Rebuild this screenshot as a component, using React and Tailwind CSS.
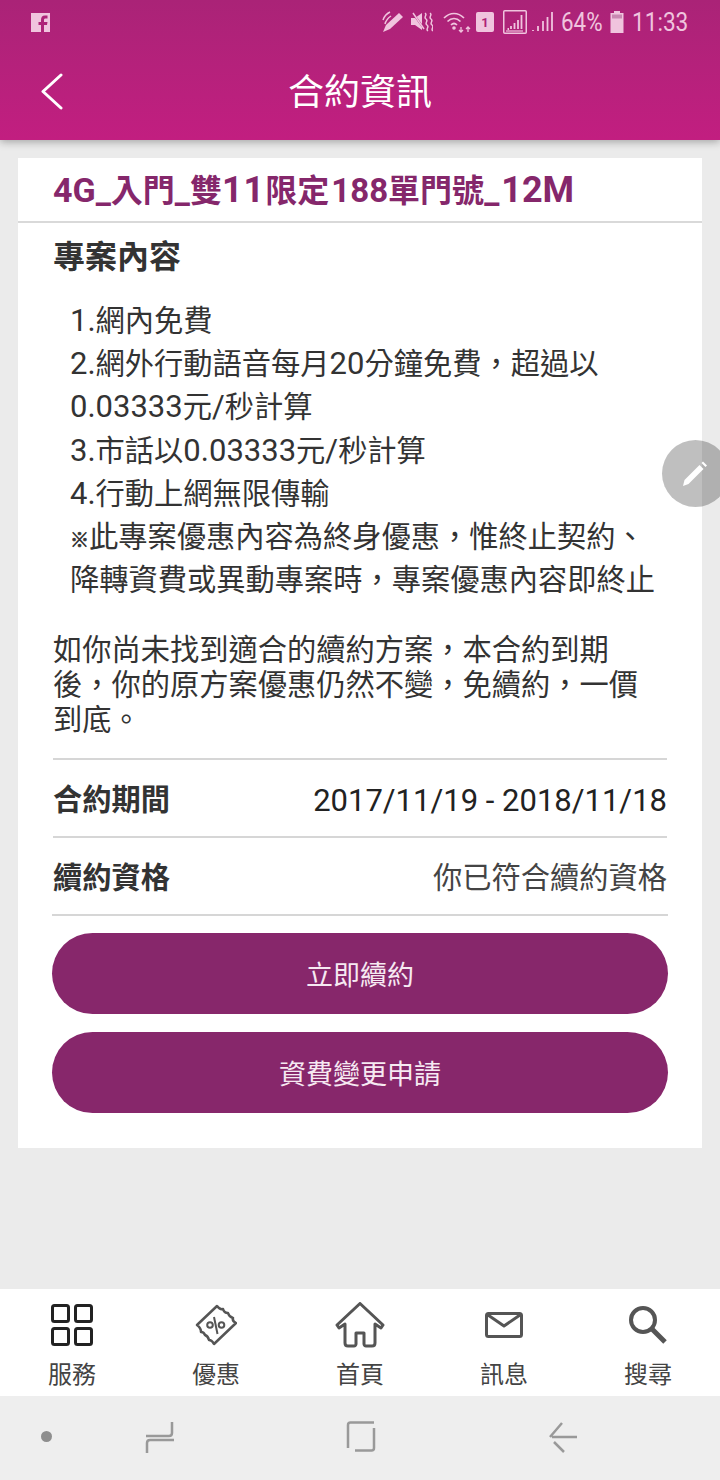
import React from "react";

const pink = "#f0c4de";
const C = "\uFF0C";

const Sb = ({ w, h, vb, children, className = "" }) => (
  <svg width={w} height={h} viewBox={vb} className={`shrink-0 ${className}`} fill="none">{children}</svg>
);

const L = ({ children }) => <span className="text-[31px] leading-[0]">{children}</span>;
const T = ({ children }) => <span className="text-[34px] leading-[0]">{children}</span>;

function StatusBar() {
  return (
    <div className="h-[44px] flex items-center justify-between pl-[30px] pr-[33px]">
      <Sb w={21} h={21} vb="0 0 21 21">
        <path fillRule="evenodd" d="M1 1h19v19h-6v-7h3l.5-3H14V8c0-1 .5-1.500 1.500-1.500h2V3.500H15C12 3.500 11 5.500 11 8v2H8.500v3H11v7H1z" fill={pink} />
      </Sb>
      <div className="flex items-center font-['Roboto',sans-serif] text-[26px] text-[#f0c4de]">
        <Sb w={23} h={22} vb="0 0 23 22" className="mr-[6px]">
          <path d="M1 21l3-7L17 2l4 4L8 18z" fill={pink} />
          <path d="M1 9c1-3 3-6 7-8M3 13C4 9 6 7 9 5" stroke={pink} strokeWidth="1.500" />
        </Sb>
        <Sb w={22} h={22} vb="0 0 22 22" className="mr-[10px]">
          <path d="M0 7h4l7-5v17l-7-5H0z" fill={pink} />
          <path d="M1 1l13 18" stroke="#ae2178" strokeWidth="2" />
          <path d="M2 2l11 16" stroke={pink} strokeWidth="1.500" />
          <path d="M14 2c3 2-2 4 1 6s-2 4 1 6-2 4 1 6M19 2c3 2-2 4 1 6s-2 4 1 6-2 4 1 6" stroke={pink} strokeWidth="1.500" />
        </Sb>
        <Sb w={29} h={22} vb="0 0 29 22" className="mr-[4px]">
          <path d="M1 7c6-6 14-6 20 0M4.500 10.500c4-4 9-4 13 0M8 14c2-2 4-2 6 0" stroke={pink} strokeWidth="1.700" />
          <circle cx="11" cy="17" r="1.800" fill={pink} />
          <path d="M18 16v5M16 19l2 2 2-2M25 21v-5M23 18l2-2 2 2" stroke={pink} strokeWidth="1.300" />
        </Sb>
        <div className="w-[18px] h-[20px] bg-[#f0c4de] rounded-[2px] flex items-center justify-center text-[13px] font-bold text-[#ae2178] mr-[9px] leading-none">1</div>
        <Sb w={24} h={24} vb="0 0 24 24" className="mr-[5px]">
          <rect x="0.750" y="0.750" width="22.500" height="22.500" rx="1" stroke={pink} strokeWidth="1.500" />
          <path d="M4.500 19h1.500M8 19v-3M11.500 19v-6M15 19v-9M18.500 19V5" stroke={pink} strokeWidth="1.800" />
          <path d="M3 21h17" stroke={pink} strokeWidth="1.200" />
        </Sb>
        <Sb w={21} h={22} vb="0 0 21 22" className="mr-[8px]">
          <path d="M1 20v-1M6 20v-5M11 20V10M15.500 20V6M20 20V1" stroke={pink} strokeWidth="1.800" />
        </Sb>
        <span className="w-[41px] mr-[8px] block whitespace-nowrap origin-left scale-x-[0.86]">64%</span>
        <Sb w={14} h={24} vb="0 0 14 24" className="mr-[8px]">
          <path d="M4 1h6v2h3.500v20H.5V3H4z" fill={pink} />
          <rect x="2" y="4.500" width="10" height="4" fill="#c987b1" />
        </Sb>
        <span className="w-[55px] block whitespace-nowrap origin-left scale-x-[0.87]">11:33</span>
      </div>
    </div>
  );
}

const Row = ({ label, value }) => (
  <div className="h-[78px] border-t-2 border-[#d6d6d6] flex items-center justify-between pt-[5px]">
    <span className="font-bold text-[#333]">{label}</span>
    {value}
  </div>
);

const Btn = ({ children }) => (
  <div className="h-[81px] rounded-full bg-[#87276b] text-[#f6e9f2] text-[27px] flex items-center justify-center pt-[4px]">{children}</div>
);

const NavItem = ({ icon, label }) => (
  <div className="w-[144px] flex flex-col items-center">
    <div className="h-[50px] flex items-center justify-center">{icon}</div>
    <div className="text-[24px] leading-[32px] mt-[9px] text-[#444]">{label}</div>
  </div>
);

export default function App() {
  return (
    <div className="relative h-[1480px] w-[720px] overflow-hidden flex flex-col bg-[#ebebeb] font-['Roboto','Noto_Sans_CJK_TC',sans-serif]">
      <div className="h-[140px] shrink-0 bg-gradient-to-b from-[#aa2377] to-[#c21e80] shadow-[0_2px_8px_rgba(0,0,0,0.3)] z-10">
        <StatusBar />
        <div className="relative h-[96px] flex items-center justify-center pt-[2px]">
          <svg className="absolute left-[40px] top-[29px]" width="23" height="37" viewBox="0 0 23 37" fill="none">
            <path d="M21 2L3 18.500 21 35" stroke="#fff" strokeWidth="3" strokeLinecap="round" strokeLinejoin="round" />
          </svg>
          <span className="text-white text-[36px]">合約資訊</span>
        </div>
      </div>

      <div className="flex-1 min-h-0 pt-[18px] px-[18px]">
        <div className="bg-white h-[990px]">
          <div className="h-[65px] border-b-2 border-[#d9d9d9] pl-[35px] pt-[2px] flex items-center text-[#85276b] font-bold text-[32px] whitespace-nowrap">
            <span><T>4G_</T>入門<T>_</T>雙<span className="text-[36px] leading-[0] tracking-[1px]">11</span>限定<span className="text-[33px] leading-[0] ml-[2px]">188</span>單門號<T>_</T><span className="text-[36px] leading-[0] ml-[2px]">12M</span></span>
          </div>
          <div className="px-[35px] text-[29.25px] text-[#333]">
            <div className="font-bold text-[32px] leading-[40px] mt-[14px]">專案內容</div>
            <div className="pl-[17px] leading-[43.2px] mt-[23px]">
              <div><L>1.</L>網內免費</div>
              <div><L>2.</L>網外行動語音每月<L>20</L>分鐘免費{C}超過以<br /><L>0.03333</L>元<L>/</L>秒計算</div>
              <div><L>3.</L>市話以<L>0.03333</L>元<L>/</L>秒計算</div>
              <div><L>4.</L>行動上網無限傳輸</div>
              <div><span className="inline-block w-[19px] text-[19px] leading-[0] font-black [-webkit-text-stroke:0.7px_#333]">※</span>此專案優惠內容為終身優惠{C}惟終止契約、<br />降轉資費或異動專案時{C}專案優惠內容即終止</div>
            </div>
            <div className="leading-[35px] mt-[31px]">
              如你尚未找到適合的續約方案{C}本合約到期<br />後{C}你的原方案優惠仍然不變{C}免續約{C}一價<br />到底。
            </div>
            <div className="mt-[20px]">
              <Row label="合約期間" value={<span className="text-[31px] text-[#222]">2017/11/19 - 2018/11/18</span>} />
              <Row label="續約資格" value={<span className="text-[#444]">你已符合續約資格</span>} />
              <div className="border-t-2 border-[#d6d6d6] pt-[17px] flex flex-col gap-[18px] -mx-[1px]">
                <Btn>立即續約</Btn>
                <Btn>資費變更申請</Btn>
              </div>
            </div>
          </div>
        </div>
      </div>

      <div className="h-[107px] shrink-0 bg-white flex pt-[11px]">
        <NavItem label="服務" icon={
          <svg width="42" height="42" viewBox="0 0 42 42" fill="none" stroke="#222" strokeWidth="3">
            <rect x="1.500" y="1.500" width="16" height="16" rx="2" /><rect x="24.500" y="1.500" width="16" height="16" rx="2" />
            <rect x="1.500" y="24.500" width="16" height="16" rx="2" /><rect x="24.500" y="24.500" width="16" height="16" rx="2" />
          </svg>} />
        <NavItem label="優惠" icon={
          <svg width="42" height="42" viewBox="0 0 42 42" fill="none" stroke="#555" strokeWidth="2.500" strokeLinejoin="round">
            <path d="M2 21L22 2Q25 6 28 5Q29 9 33 9Q34 13 38 14Q37 17 41 19L19 40Q17 36 14 36Q13 32 10 31Q9 28 6 28Q6 24 2 21z" />
            <circle cx="15" cy="21" r="2.800" strokeWidth="2" /><circle cx="26.500" cy="21" r="2.800" strokeWidth="2" />
            <path d="M19 13l3.500 17" strokeWidth="2" />
          </svg>} />
        <NavItem label="首頁" icon={
          <svg width="50" height="46" viewBox="0 0 50 46" fill="none" stroke="#555" strokeWidth="3" strokeLinejoin="round">
            <path d="M25 1.500L2 23l2 3 6-4v19c0 2 1 3 3 3h6c1 0 2-1 2-2V31h8v11c0 1 1 2 2 2h6c2 0 3-1 3-3V22l6 4 2-3z" />
          </svg>} />
        <NavItem label="訊息" icon={
          <svg width="38" height="26" viewBox="0 0 38 26" fill="none" stroke="#555" strokeWidth="3" strokeLinejoin="round">
            <rect x="1.500" y="1.500" width="35" height="23" rx="2" /><path d="M3 3l16 11L35 3" />
          </svg>} />
        <NavItem label="搜尋" icon={
          <svg width="40" height="40" viewBox="0 0 40 40" fill="none" stroke="#555">
            <circle cx="15" cy="15" r="12" strokeWidth="4" /><path d="M24 24l13 13" strokeWidth="5" />
          </svg>} />
      </div>

      <div className="h-[84px] shrink-0 bg-[#eeeeee] relative">
        <div className="absolute left-[41px] top-[35px] w-[11px] h-[11px] rounded-full bg-[#8e8e8e]" />
        <svg className="absolute left-[145px] top-[25px]" width="30" height="34" viewBox="0 0 30 34" fill="none" stroke="#999" strokeWidth="2.500">
          <path d="M27 1v11c0 2-1 3-3 3H1M2 32V22c0-2 1-3 3-3h24" />
        </svg>
        <svg className="absolute left-[346px] top-[25px]" width="30" height="32" viewBox="0 0 30 32" fill="none" stroke="#999" strokeWidth="2.500">
          <path d="M2 27V4c0-1.500 1-2.500 2.500-2.500H28M28 7v20c0 1.500-1 2.500-2.500 2.500H9" />
        </svg>
        <svg className="absolute left-[548px] top-[25px]" width="30" height="32" viewBox="0 0 30 32" fill="none" stroke="#999" strokeWidth="2.500">
          <path d="M14 2L2 16M6 21l10 10M4 16h25" />
        </svg>
      </div>

      <div className="absolute left-[662px] top-[440px] w-[67px] h-[67px] rounded-full bg-[rgba(0,0,0,0.25)] flex items-center pl-[19px]">
        <svg width="28" height="28" viewBox="0 0 28 28"><path d="M2 26l1.500-6L18.500 5l4 4-15 15z" fill="#fff" /><path d="M20.500 3l1.500-1.500 4 4L24.500 7z" fill="#fff" /></svg>
      </div>
    </div>
  );
}
